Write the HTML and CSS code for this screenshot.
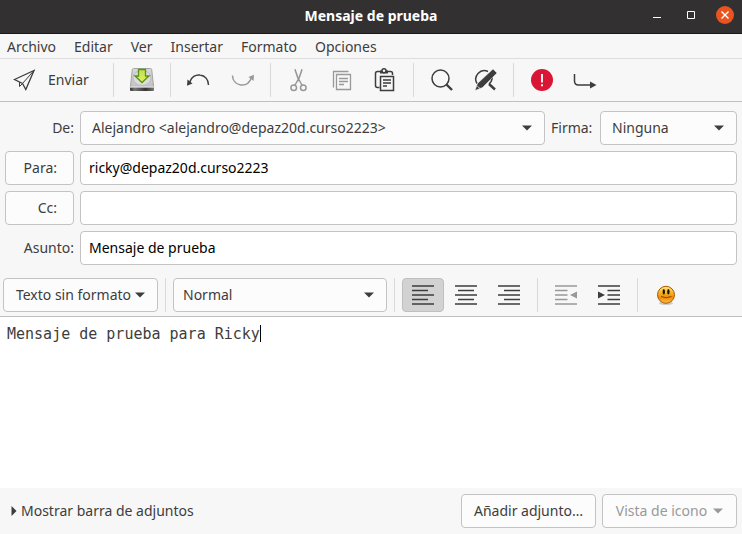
FILE: index.html
```html
<!DOCTYPE html>
<html lang="es">
<head>
<meta charset="utf-8">
<title>Mensaje de prueba</title>
<link rel="stylesheet" href="styles.css">
</head>
<body>
<header class="titlebar">
  <h1>Mensaje de prueba</h1>
  <div class="window-controls">
    <button type="button" aria-label="Minimizar"><svg width="18" height="18"><path d="M5 11.500h8" stroke="#fff"/></svg></button>
    <button type="button" aria-label="Maximizar"><svg width="18" height="18"><path d="M5.500 5.500h7v7h-7z" fill="none" stroke="#fff"/></svg></button>
    <button type="button" class="close" aria-label="Cerrar"><svg width="18" height="18"><path d="M5.500 5.500l7 7m0-7l-7 7" stroke="#fff" stroke-width="1.400"/></svg></button>
  </div>
</header>
<nav class="menubar">
  <button type="button">Archivo</button>
  <button type="button">Editar</button>
  <button type="button">Ver</button>
  <button type="button">Insertar</button>
  <button type="button">Formato</button>
  <button type="button">Opciones</button>
</nav>
<div class="toolbar main-tools" role="toolbar">
  <button type="button" class="send">
    <svg width="24" height="24" fill="none" stroke="#3d3d3d" stroke-width="1.300"><path d="M2.500 11.500L22 2.500 13.800 21.500 10.500 15.500z"/><path d="M10.500 15.500L22 2.500" stroke-width="1"/><path d="M7.500 14v4.500l3-3" stroke-width="1"/></svg>
    <span>Enviar</span>
  </button>
  <span class="sep"></span>
  <button type="button" class="tool" aria-label="Guardar">
    <svg width="26" height="26">
      <defs>
        <linearGradient id="top" x2="0" y2="1"><stop stop-color="#d9d9d9"/><stop offset="1" stop-color="#c1c1c1"/></linearGradient>
        <linearGradient id="side"><stop stop-color="#353535"/><stop offset=".2" stop-color="#777"/><stop offset=".65" stop-color="#333"/><stop offset="1" stop-color="#777"/></linearGradient>
        <linearGradient id="down" x2="0" y2="1"><stop stop-color="#bfe04e"/><stop offset="1" stop-color="#e6ef62"/></linearGradient>
      </defs>
      <path d="M4.500 1.500h17q1 0 1.200 1l2 18H1.300l2-18q.2-1 1.200-1z" fill="url(#top)" stroke="#a5a5a5"/>
      <ellipse cx="13" cy="11" rx="9" ry="7.500" fill="#dcdcdc" stroke="#bbb"/>
      <path d="M1 20.500h24v2.500q0 1-1 1H2q-1 0-1-1z" fill="url(#side)"/>
      <path d="M1 20h24" stroke="#e4e4e4"/>
      <path d="M9.500 2.500h7v6.500h3.500L13 15.500 6 9h3.500z" fill="url(#down)" stroke="#579316" stroke-width="1.300"/>
    </svg>
  </button>
  <span class="sep"></span>
  <button type="button" class="tool" aria-label="Deshacer">
    <svg width="26" height="24"><path d="M3.500 14.500C5 8.500 10 6.500 14 7 19 7.500 22.500 11.500 22.500 17" fill="none" stroke="#3d3d3d" stroke-width="1.500"/><path d="M1 17.800L1.500 11.500 6.500 15.500z" fill="#3d3d3d"/></svg>
  </button>
  <button type="button" class="tool" aria-label="Rehacer" disabled>
    <svg width="26" height="24"><path d="M3.500 7.500C3.500 12 6.500 16 11.500 17 16 17.500 20.500 15.500 22.500 9.500" fill="none" stroke="#999" stroke-width="1.500"/><path d="M25 6.800L24.500 13 19.500 9z" fill="#999"/></svg>
  </button>
  <span class="sep"></span>
  <button type="button" class="tool" aria-label="Cortar" disabled>
    <svg width="24" height="24" fill="none" stroke="#979797" stroke-width="1.500"><path d="M8 1.500L10.500 9l5 9M15 1.500L12.500 9l-5 9M8 1.500L12 13M15 1.500L11 13"/><circle cx="6.700" cy="19.800" r="2.800"/><circle cx="16.300" cy="19.800" r="2.800"/></svg>
  </button>
  <button type="button" class="tool" aria-label="Copiar" disabled>
    <svg width="24" height="24" fill="none" stroke="#999" stroke-width="1.300"><path d="M3.500 19.500V3.500h15"/><path d="M6.500 6.500h14v15h-14z"/><path d="M9 10.500h9M9 13.500h9M9 16.500h5"/></svg>
  </button>
  <button type="button" class="tool" aria-label="Pegar">
    <svg width="24" height="24" fill="none" stroke="#3d3d3d" stroke-width="1.500"><path d="M6.500 19.500H4.500Q2.500 19.500 2.500 17.500V5.500Q2.500 3.500 4.500 3.500H17.500Q19.500 3.500 19.500 5.500V7"/><path d="M7 2.500h8v3H7z" fill="#3d3d3d" stroke="none"/><circle cx="11" cy="2.800" r="2" fill="#f7f7f7"/><path d="M7.500 8.500h13v14h-13z" fill="#f7f7f7"/><path d="M10 12h8M10 15h8M10 18h4"/></svg>
  </button>
  <span class="sep"></span>
  <button type="button" class="tool" aria-label="Buscar">
    <svg width="24" height="24" fill="none" stroke="#3d3d3d"><circle cx="10.500" cy="10.500" r="8.500" stroke-width="1.500"/><path d="M16.500 16.500l5.500 5.500" stroke-width="2.400"/></svg>
  </button>
  <button type="button" class="tool" aria-label="Buscar y reemplazar">
    <svg width="24" height="24" fill="none" stroke="#3d3d3d"><path d="M4 15.500A8.500 8.500 0 0 1 15 3.500M19 9q.5 4-3 7" stroke-width="1.500"/><path d="M16 16l6 5.500" stroke-width="2.400"/><path d="M20 1l4 4L9.500 19.500 2 22.500 4.500 15.500z" fill="#3d3d3d" stroke="#f7f7f7" stroke-width=".5"/><path d="M4.300 18.200l3 2.500" stroke="#f7f7f7" stroke-width=".8"/></svg>
  </button>
  <span class="sep"></span>
  <button type="button" class="tool" aria-label="Importante">
    <svg width="24" height="24"><circle cx="12" cy="12" r="11" fill="#da1636"/><path d="M12 6v8.500M12 16.300v2" stroke="#fff" stroke-width="1.800"/></svg>
  </button>
  <button type="button" class="tool" aria-label="Acuse de recibo">
    <svg width="26" height="24"><path d="M2.500 6v7Q2.500 17 6.500 17H19" fill="none" stroke="#3d3d3d" stroke-width="1.500"/><path d="M18 13.500L24.500 17 18 20.500z" fill="#3d3d3d"/></svg>
  </button>
</div>
<main class="composer">
  <form class="fields">
    <label class="name" for="from">De:</label>
    <div class="from-row">
      <div class="picker grow"><select id="from"><option>Alejandro &lt;alejandro@depaz20d.curso2223&gt;</option></select><svg class="arrow" width="10" height="6"><path d="M0 .5h10L5 5.500z"/></svg></div>
      <label class="signature-label" for="signature">Firma:</label>
      <div class="picker signature"><select id="signature"><option>Ninguna</option></select><svg class="arrow" width="10" height="6"><path d="M0 .5h10L5 5.500z"/></svg></div>
    </div>
    <button type="button" class="box recipient" id="to-label">Para:</button>
    <input class="box" type="text" aria-labelledby="to-label" value="ricky@depaz20d.curso2223">
    <button type="button" class="box recipient" id="cc-label">Cc:</button>
    <input class="box" type="text" aria-labelledby="cc-label">
    <label class="name" for="subject">Asunto:</label>
    <input class="box" type="text" id="subject" value="Mensaje de prueba">
  </form>
  <div class="toolbar format-tools" role="toolbar">
    <button type="button" class="box format">Texto sin formato<svg width="10" height="6"><path d="M0 .5h10L5 5.500z"/></svg></button>
    <span class="sep"></span>
    <div class="picker style"><select aria-label="Estilo de párrafo"><option>Normal</option></select><svg class="arrow" width="10" height="6"><path d="M0 .5h10L5 5.500z"/></svg></div>
    <span class="sep"></span>
    <button type="button" class="tool pressed" aria-label="Izquierda" aria-pressed="true"><svg width="22" height="22" stroke="#3d3d3d" stroke-width="1.500"><path d="M0 2h22M0 6.500h16M0 11h22M0 15.500h16M0 20h22"/></svg></button>
    <button type="button" class="tool" aria-label="Centro"><svg width="22" height="22" stroke="#3d3d3d" stroke-width="1.500"><path d="M0 2h22M3 6.500h16M0 11h22M3 15.500h16M0 20h22"/></svg></button>
    <button type="button" class="tool" aria-label="Derecha"><svg width="22" height="22" stroke="#3d3d3d" stroke-width="1.500"><path d="M0 2h22M6 6.500h16M0 11h22M6 15.500h16M0 20h22"/></svg></button>
    <span class="sep"></span>
    <button type="button" class="tool" aria-label="Reducir sangría" disabled><svg width="22" height="22" stroke="#999" stroke-width="1.500"><path d="M0 2h22M0 6.500h12.500M0 11h12.500M0 15.500h12.500M0 20h22"/><path d="M22 7.500v7L15 11z" fill="#999" stroke="none"/></svg></button>
    <button type="button" class="tool" aria-label="Aumentar sangría"><svg width="22" height="22" stroke="#3d3d3d" stroke-width="1.500"><path d="M0 2h22M9.500 6.500H22M9.500 11H22M9.500 15.500H22M0 20h22"/><path d="M0 7.500v7L7 11z" fill="#3d3d3d" stroke="none"/></svg></button>
    <span class="sep"></span>
    <button type="button" class="tool" aria-label="Insertar emoticono">
      <svg width="22" height="22">
        <defs>
          <linearGradient id="face" x2="0" y2="1"><stop stop-color="#ffe98a"/><stop offset=".3" stop-color="#fbc02a"/><stop offset=".65" stop-color="#f28a08"/><stop offset="1" stop-color="#ffc03c"/></linearGradient>
        </defs>
        <ellipse cx="11" cy="19.300" rx="7" ry="1.800" fill="#ccc"/>
        <circle cx="11" cy="10.800" r="8.500" fill="url(#face)" stroke="#a65a06"/>
        <ellipse cx="8.800" cy="7.700" rx="1.200" ry="2.700" fill="#1c1200"/><ellipse cx="13.400" cy="7.700" rx="1.200" ry="2.700" fill="#1c1200"/>
        <path d="M6 12.500q5 2.500 10.500 0" fill="none" stroke="#8a4800"/>
      </svg>
    </button>
  </div>
  <div class="editor">
    <textarea aria-label="Cuerpo del mensaje" spellcheck="false">Mensaje de prueba para Ricky</textarea>
    <span class="caret"></span>
  </div>
</main>
<footer class="attachments">
  <button type="button" class="expander"><svg width="6" height="10"><path d="M.5 0L5.500 5 .5 10z"/></svg>Mostrar barra de adjuntos</button>
  <button type="button" class="box add">Añadir adjunto…</button>
  <button type="button" class="box view" disabled>Vista de icono<svg width="10" height="6"><path d="M0 .5h10L5 5.500z"/></svg></button>
</footer>
</body>
</html>
```
FILE: styles.css
```css
* {
  box-sizing: border-box;
}

body {
  margin: 0;
  min-height: 100vh;
  display: flex;
  flex-direction: column;
  background: #f7f7f7;
  color: #3d3d3d;
  font: 14px/20px "Noto Sans", "Open Sans", sans-serif;
}

button,
select,
input {
  font: inherit;
  color: inherit;
}

button {
  border: 0;
  padding: 0;
  background: none;
  white-space: nowrap;
}

svg {
  display: block;
  flex: none;
}

svg:not([fill]) {
  fill: currentColor;
}

.titlebar {
  display: grid;
  grid-template-columns: 1fr auto 1fr;
  align-items: center;
  height: 34px;
  padding: 0 8px 2px;
  background: #333031;
  border-bottom: 1px solid #1c1819;
  color: #fff;
}

.titlebar h1 {
  grid-column: 2;
  margin: 0;
  font-size: 14px;
  line-height: 20px;
}

.window-controls {
  display: flex;
  justify-content: flex-end;
  gap: 16px;
  padding-bottom: 1px;
}

.close {
  border-radius: 50%;
  background: #e95420;
}

.menubar {
  display: flex;
  gap: 18px;
  height: 25px;
  padding: 1px 7px 0;
  border-bottom: 1px solid #dcdcdc;
}

.toolbar {
  display: flex;
  align-items: center;
  gap: 1px;
  padding: 4px 3px;
}

.main-tools {
  height: 43px;
  border-bottom: 1px solid #c0c0c0;
}

.send {
  display: flex;
  align-items: center;
  gap: 12px;
  width: 103px;
  padding-left: 9px;
}

.sep {
  width: 1px;
  height: 34px;
  margin: 0 6px;
  background: #d9d9d9;
}

.tool {
  display: grid;
  place-items: center;
  width: 42px;
  height: 34px;
}

.pressed {
  border: 1px solid #bfbfbf;
  border-radius: 4px;
  background: #d2d2d2;
}

.composer {
  flex: 1;
  display: flex;
  flex-direction: column;
}

.fields {
  display: grid;
  grid-template-columns: 69px 1fr;
  gap: 6px;
  align-items: center;
  padding: 9px 5px;
}

.name {
  text-align: right;
}

.from-row {
  display: flex;
  align-items: center;
  gap: 6px;
}

.grow {
  flex: 1;
}

.box,
.picker select {
  height: 34px;
  border: 1px solid #c3c3c3;
  border-radius: 4px;
  background: #fcfcfc;
}

input.box {
  width: 100%;
  padding: 0 8px 1px;
  background: #fff;
  color: #000;
}

.recipient {
  padding-right: 16px;
  text-align: right;
}

.picker {
  position: relative;
}

.picker select {
  display: block;
  width: 100%;
  padding: 0 28px 0 11px;
  appearance: none;
}

.arrow {
  position: absolute;
  right: 13px;
  top: 14px;
  pointer-events: none;
}

.signature-label {
  width: 43px;
}

.signature {
  width: 137px;
}

.style {
  width: 214px;
}

.style select {
  padding-left: 9px;
}

.format-tools {
  border-bottom: 1px solid #c0c0c0;
}

.format,
.view {
  display: flex;
  align-items: center;
  justify-content: center;
  gap: 4px;
}

.format {
  width: 155px;
}

.editor {
  position: relative;
  flex: 1;
  display: flex;
  background: #fff;
  font: 15px/20px "DejaVu Sans Mono", monospace;
}

.editor textarea {
  flex: 1;
  padding: 7px;
  border: 0;
  outline: 0;
  resize: none;
  background: none;
  color: inherit;
  font: inherit;
}

.caret {
  position: absolute;
  left: calc(7px + 28ch);
  top: 8px;
  width: 1px;
  height: 17px;
  background: #000;
}

.attachments {
  display: flex;
  align-items: center;
  gap: 6px;
  height: 46px;
  padding: 0 5px;
}

.expander {
  display: flex;
  align-items: center;
  gap: 4px;
  margin-right: auto;
  padding-left: 6px;
}

.add,
.view {
  width: 135px;
}

.view {
  gap: 6px;
  color: #999;
}
```
